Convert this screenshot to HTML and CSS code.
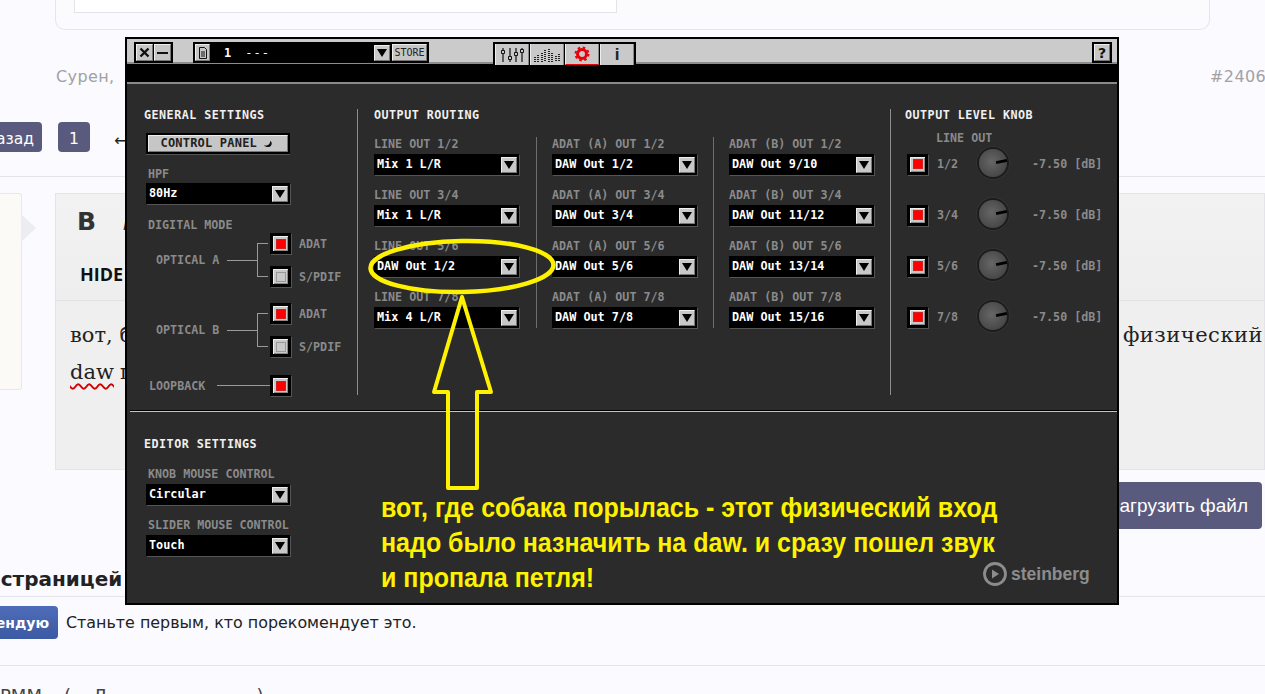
FILE: index.html
```html
<!DOCTYPE html>
<html lang="ru">
<head>
<meta charset="utf-8">
<title>Forum</title>
<link rel="stylesheet" href="styles.css">
</head>
<body>
<div class="page">
  <div class="topcard"><div class="quote"></div></div>
  <div class="author"><span>Сурен,</span><span class="postnum">#2406</span></div>
  <div class="pager"><a class="pagebtn back">назад</a><a class="pagebtn one">1</a><span class="pagearrow">←</span></div>
  <div class="compose">
    <div class="avatarbox"></div>
    <div class="editor">
      <div class="tools"><div class="fmt"><b class="bold">B</b><i class="ital">I</i></div><b class="hide">HIDE</b></div>
      <div class="edittext">
        <p class="editline"><span>вот, б</span><span class="phys">физический</span></p>
        <p class="editline"><span class="spell">daw</span> г</p>
      </div>
    </div>
  </div>
  <div class="uploadrow"><a class="upload">Загрузить файл</a></div>
  <h2 class="share">Поделиться страницей</h2>
  <div class="like"><a class="likebtn">Рекомендую</a><span>Станьте первым, кто порекомендует это.</span></div>
  <p class="foot">РММ<span class="f1">(</span><span class="f2">Л</span><span class="f3">)</span></p>
</div>

<div class="win">
  <div class="titlebar">
    <div class="frame"><span class="tb"><svg width="11" height="11" viewBox="0 0 11 11"><path d="M1.500 1.500l8 8M9.500 1.500l-8 8" stroke="#111" stroke-width="2.400" fill="none"/></svg></span><span class="tb tbmin"></span></div>
    <div class="preset">
      <span class="tb docbtn"><svg width="10" height="12" viewBox="0 0 10 12"><path d="M1.500.5h5l2 2v9h-7zM3 5h4M3 7h4M3 9h4" fill="none" stroke="#111"/></svg></span>
      <span class="presetnum">1</span><span class="presetname">---</span>
      <span class="drop presetdrop"></span>
      <span class="store">STORE</span>
    </div>
    <div class="tabs">
      <span class="tab"><svg width="26" height="16" viewBox="0 0 26 16"><path d="M4 1v14M11 1v14M17 1v14M23 1v14" stroke="#111" fill="none" stroke-width="1.200"/><path d="M2.500 3.500h3v3h-3zM9.500 9.500h3v3h-3zM15.500 5.500h3v3h-3zM21.500 2.500h3v3h-3z" fill="#ccc" stroke="#111"/></svg></span>
      <span class="tab"><svg width="26" height="14" viewBox="0 0 26 14"><path d="M1 9v5M4 7v7M8 5v9M11 2v12M15 1v13M18 5v9M22 8v6M25 6v8" stroke="#222" stroke-width="2" stroke-dasharray="1 1" fill="none"/></svg></span>
      <span class="tab tabon"><svg width="16" height="16" viewBox="0 0 16 16"><circle cx="8" cy="8" r="4.500" fill="none" stroke="#e8000a" stroke-width="3"/><circle cx="8" cy="8" r="6.500" fill="none" stroke="#e8000a" stroke-width="2" stroke-dasharray="2.500 2.600"/></svg></span>
      <span class="tab"><b class="info">i</b></span>
    </div>
    <div class="helpbtn"><span class="tb">?</span></div>
  </div>
  <div class="strip"></div>
  <div class="upper">
    <section class="general">
      <h3 class="head">GENERAL SETTINGS</h3>
      <div class="cpanel"><span class="cpface">CONTROL PANEL<svg width="10" height="10" viewBox="0 0 12 10"><path d="M8.500 1c.5 4-3 6.500-7.500 5.500 2 3 9.500 3.500 9.500-2.500 0-1-.5-2-2-3z" fill="#111"/></svg></span></div>
      <div class="lab hpf">HPF</div>
      <div class="sel gensel"><span>80Hz</span><i class="drop"></i></div>
      <div class="lab digi">DIGITAL MODE</div>
      <div class="opt opta">
        <span class="lab optname">OPTICAL A</span><i class="wire"></i><i class="brace"></i>
        <div class="optchecks">
          <div class="optrow"><i class="check on"></i><span class="lab">ADAT</span></div>
          <div class="optrow"><i class="check"></i><span class="lab">S/PDIF</span></div>
        </div>
      </div>
      <div class="opt optb">
        <span class="lab optname">OPTICAL B</span><i class="wire"></i><i class="brace"></i>
        <div class="optchecks">
          <div class="optrow"><i class="check on"></i><span class="lab">ADAT</span></div>
          <div class="optrow"><i class="check"></i><span class="lab">S/PDIF</span></div>
        </div>
      </div>
      <div class="loop"><span class="lab">LOOPBACK</span><i class="loopwire"></i><i class="check on"></i></div>
    </section>
    <i class="vrule"></i>
    <section class="routing">
      <h3 class="head">OUTPUT ROUTING</h3>
      <div class="routecols">
        <div class="routecol">
          <div class="lab">LINE OUT 1/2</div><div class="sel"><span>Mix 1 L/R</span><i class="drop"></i></div>
          <div class="lab">LINE OUT 3/4</div><div class="sel"><span>Mix 1 L/R</span><i class="drop"></i></div>
          <div class="lab">LINE OUT 5/6</div><div class="sel"><span>DAW Out 1/2</span><i class="drop"></i></div>
          <div class="lab">LINE OUT 7/8</div><div class="sel"><span>Mix 4 L/R</span><i class="drop"></i></div>
        </div>
        <div class="routecol ruled">
          <div class="lab">ADAT (A) OUT 1/2</div><div class="sel"><span>DAW Out 1/2</span><i class="drop"></i></div>
          <div class="lab">ADAT (A) OUT 3/4</div><div class="sel"><span>DAW Out 3/4</span><i class="drop"></i></div>
          <div class="lab">ADAT (A) OUT 5/6</div><div class="sel"><span>DAW Out 5/6</span><i class="drop"></i></div>
          <div class="lab">ADAT (A) OUT 7/8</div><div class="sel"><span>DAW Out 7/8</span><i class="drop"></i></div>
        </div>
        <div class="routecol ruled">
          <div class="lab">ADAT (B) OUT 1/2</div><div class="sel"><span>DAW Out 9/10</span><i class="drop"></i></div>
          <div class="lab">ADAT (B) OUT 3/4</div><div class="sel"><span>DAW Out 11/12</span><i class="drop"></i></div>
          <div class="lab">ADAT (B) OUT 5/6</div><div class="sel"><span>DAW Out 13/14</span><i class="drop"></i></div>
          <div class="lab">ADAT (B) OUT 7/8</div><div class="sel"><span>DAW Out 15/16</span><i class="drop"></i></div>
        </div>
      </div>
    </section>
    <i class="vrule"></i>
    <section class="level">
      <h3 class="head">OUTPUT LEVEL KNOB</h3>
      <div class="lab lineout">LINE OUT</div>
      <div class="knobrow"><i class="check on"></i><span class="lab knoblab">1/2</span><i class="knob"></i><span class="lab">-7.50 [dB]</span></div>
      <div class="knobrow"><i class="check on"></i><span class="lab knoblab">3/4</span><i class="knob"></i><span class="lab">-7.50 [dB]</span></div>
      <div class="knobrow"><i class="check on"></i><span class="lab knoblab">5/6</span><i class="knob"></i><span class="lab">-7.50 [dB]</span></div>
      <div class="knobrow"><i class="check on"></i><span class="lab knoblab">7/8</span><i class="knob"></i><span class="lab">-7.50 [dB]</span></div>
    </section>
  </div>
  <div class="split"></div>
  <section class="lower">
    <h3 class="head">EDITOR SETTINGS</h3>
    <div class="lab knobctl">KNOB MOUSE CONTROL</div>
    <div class="sel gensel"><span>Circular</span><i class="drop"></i></div>
    <div class="lab slidectl">SLIDER MOUSE CONTROL</div>
    <div class="sel gensel"><span>Touch</span><i class="drop"></i></div>
    <div class="logo">
      <svg width="26" height="26" viewBox="0 0 26 26"><circle cx="13" cy="13" r="10.500" fill="none" stroke="#8c8c8c" stroke-width="2.800"/><path d="M10 8.500l7 4.500-7 4.500z" fill="#8c8c8c"/></svg>
      <span>steinberg</span>
    </div>
  </section>
</div>

<svg class="marks" width="1265" height="694" viewBox="0 0 1265 694">
  <ellipse cx="462" cy="266.500" rx="91.500" ry="25.500" transform="rotate(-1 462 266.500)" fill="none" stroke="#fff200" stroke-width="4.500"/>
  <path d="M462 297L434 392H448V488H477V392H491Z" fill="none" stroke="#fff200" stroke-width="4" stroke-linejoin="round"/>
</svg>
<p class="note">вот, где собака порылась - этот физический вход<br>надо было назначить на daw. и сразу пошел звук<br>и пропала петля!</p>
</body>
</html>
```
FILE: styles.css
```css
* { box-sizing: border-box; }
html, body { margin: 0; height: 694px; overflow: hidden; background: #fafaff; }
body { position: relative; width: 1265px; font-family: "DejaVu Sans", sans-serif; color: #222; }
p, h2, h3 { margin: 0; }

/* forum page behind the window */
.page { width: 1265px; height: 694px; overflow: hidden; }
.topcard { margin: 0 55px; height: 30px; border: 1px solid #e5e5ec; border-top: 0; border-radius: 0 0 10px 10px; background: #fbfbfe; padding-left: 18px; }
.quote { width: 543px; height: 13px; border: 1px solid #e3e3ea; border-top: 0; background: #fff; }
.author { display: flex; justify-content: space-between; margin-top: 36px; height: 22px; padding-left: 56px; font-size: 16px; line-height: 22px; color: #a2a2a2; letter-spacing: .4px; }
.postnum { width: 55px; white-space: nowrap; overflow: visible; }
.pager { display: flex; align-items: center; margin-top: 34px; height: 30px; }
.pagebtn { display: block; height: 30px; line-height: 34px; background: #5a5a7e; color: #fff; border-radius: 4px; font-size: 15.500px; text-align: center; }
.back { width: 42px; margin-right: 16px; direction: rtl; padding-right: 8px; overflow: hidden; white-space: nowrap; text-align: right; border-radius: 0 4px 4px 0; }
.one { width: 32px; }
.pagearrow { margin-left: 24px; padding-top: 7px; font-size: 16px; }
.compose { display: flex; margin-top: 41px; height: 277px; position: relative; }
.compose::before { content: ""; position: absolute; left: 0; right: 0; top: -17px; height: 1px; background: #e4e4ea; }
.avatarbox { position: relative; width: 22px; height: 197px; background: #fbfaf6; border: 1px solid #e8e8e8; border-left: 0; border-radius: 0 3px 3px 0; }
.avatarbox::after { content: ""; position: absolute; left: 21px; top: 20px; width: 0; height: 0; border: 14px solid transparent; border-left: 15px solid #ecedf0; }
.editor { margin-left: 33px; flex: 1; min-width: 0; background: #efeff0; border: 1px solid #e4e4ea; }
.tools { height: 107px; border-bottom: 1px solid #e2e2e6; padding: 14px 0 0 21px; display: flex; flex-direction: column; background: linear-gradient(#f2f2f3, #eeeeef); }
.fmt { display: flex; gap: 27px; height: 28px; }
.bold { font-size: 25px; line-height: 28px; color: #333; }
.ital { font: italic bold 25px/28px "DejaVu Sans", sans-serif; color: #333; }
.hide { font: bold 18px/22px "Open Sans", sans-serif; color: #111; margin: 27px 0 0 3px; }
.edittext { padding: 16px 1px 0 14px; font: 21px/37px "DejaVu Serif", serif; color: #222; }
.editline { display: flex; gap: 6px; }
.phys { margin-left: auto; letter-spacing: .5px; }
.spell { text-decoration: underline wavy #d40000; text-decoration-thickness: 1.500px; text-underline-offset: 4px; }
.uploadrow { display: flex; justify-content: flex-end; margin-top: 12px; height: 48px; padding-right: 3px; }
.upload { width: 182px; height: 47px; background: #5a5a7e; color: #fff; border-radius: 4px; font: 19px/48px "Liberation Sans", sans-serif; text-align: right; padding-right: 14px; white-space: nowrap; }
.share { margin: 36px 0 0 -144px; font-size: 20px; line-height: 26px; white-space: nowrap; height: 30px; }
.like { display: flex; align-items: center; gap: 8px; height: 33px; margin-top: 10px; font-size: 15.900px; position: relative; }
.like::before { content: ""; position: absolute; left: 0; right: 0; top: -10px; height: 1px; background: #e4e4ea; }
.like::after { content: ""; position: absolute; left: 0; right: 0; top: 59px; height: 1px; background: #e4e4ea; }
.likebtn { width: 58px; height: 33px; background: linear-gradient(#4f6cb8, #3b5aa3); color: #fff; font-weight: bold; font-size: 14px; line-height: 34px; border-radius: 0 4px 4px 0; overflow: hidden; white-space: nowrap; direction: rtl; padding-right: 9px; }
.foot { margin-top: 47px; font-size: 18px; line-height: 20px; color: #444; }
.f1 { margin-left: 22px; }
.f2 { margin-left: 22px; }
.f3 { margin-left: 150px; }

/* the pasted hardware control-panel window */
.win { position: absolute; left: 125px; top: 37px; width: 994px; height: 568px; border: 2px solid #000; background: #2b2b2b; font-family: "DejaVu Sans Mono", monospace; overflow: hidden; }
.titlebar { display: flex; align-items: flex-start; height: 25px; padding: 3px 0 0 7px; background: #cbcbcb; border-bottom: 2px solid #8d8d8d; }
.frame { display: flex; gap: 1px; height: 21px; background: #000; padding: 2px; }
.tb { display: flex; align-items: center; justify-content: center; width: 17px; height: 17px; background: #c6c6c6; border: 1px solid; border-color: #eee #777 #777 #eee; color: #111; font: bold 14px/1 "DejaVu Sans", sans-serif; }
.tbmin::after { content: ""; width: 11px; height: 2px; background: #111; }
.preset { display: flex; align-items: center; width: 236px; height: 21px; margin-left: 20px; background: #000; padding: 2px; color: #fff; font: bold 12px/1 "DejaVu Sans Mono", monospace; }
.docbtn { width: 15px; }
.presetnum { margin-left: 14px; }
.presetname { margin-left: 14px; letter-spacing: 1px; font-weight: normal; }
.presetdrop { margin-left: auto; width: 16px; height: 17px; }
.store { display: block; width: 35px; height: 17px; margin-left: 2px; background: #c6c6c6; border: 1px solid; border-color: #eee #777 #777 #eee; color: #222; font: 10px/15px "DejaVu Sans Mono", monospace; text-align: center; }
.tabs { display: flex; gap: 1px; height: 23px; width: 143px; margin-left: 64px; background: #000; padding: 2px 2px 0; }
.tab { display: flex; align-items: center; justify-content: center; width: 34px; height: 21px; background: #c9c9c9; border-left: 1px solid #eee; border-right: 1px solid #888; }
.tabon { border-bottom: 1px solid #e8000a; }
.info { font: bold 17px/1 "Liberation Sans", sans-serif; color: #222; }
.helpbtn { margin-left: auto; margin-right: 5px; width: 20px; height: 21px; background: #000; padding: 2px; }
.helpbtn .tb { width: 16px; }
.strip { height: 18px; background: #000; }
.upper { display: flex; height: 328px; border-top: 2px solid #8a8a8a; }
.head { font: bold 11.700px/16px "DejaVu Sans Mono", monospace; color: #f0f0f0; letter-spacing: .5px; white-space: nowrap; }
.lab { font: bold 11.700px/14px "DejaVu Sans Mono", monospace; color: #8a8a8a; white-space: nowrap; }
.vrule { display: block; width: 1px; height: 286px; margin-top: 25px; background: #8e8e8e; }

.general { width: 230px; padding: 23px 0 0 17px; }
.cpanel { width: 144px; height: 21px; margin: 10px 0 0 2px; background: #000; padding: 2px; box-shadow: 0 1px 0 #555; }
.cpface { display: flex; align-items: center; justify-content: flex-end; gap: 6px; height: 17px; padding-right: 14px; background: #c6c6c6; border: 1px solid; border-color: #eee #777 #777 #eee; color: #222; font: bold 12px/15px "DejaVu Sans Mono", monospace; letter-spacing: .2px; white-space: nowrap; }
.hpf { margin: 13px 0 0 4px; }
.sel { display: flex; align-items: center; justify-content: space-between; width: 145px; height: 21px; margin-top: 3px; padding: 0 2px 0 3px; background: #000; box-shadow: 1px 1px 0 #555; color: #fff; font: bold 11.800px/1 "DejaVu Sans Mono", monospace; white-space: nowrap; }
.gensel { margin-left: 2px; width: 144px; }
.general .sel { margin-top: 2px; }
.drop { display: flex; align-items: center; justify-content: center; width: 16px; height: 16px; background: #c8c8c8; border: 1px solid; border-color: #eee #777 #777 #eee; }
.drop::after { content: ""; width: 0; height: 0; border: 5px solid transparent; border-top: 8px solid #000; border-bottom: 0; }
.digi { margin: 14px 0 0 4px; }
.opt { display: flex; align-items: center; height: 56px; margin-left: 12px; }
.opta { margin-top: 0; }
.optb { margin-top: 14px; }
.optname { width: 71px; }
.wire { display: block; width: 30px; height: 1px; background: #9a9a9a; }
.brace { display: block; width: 11px; height: 34px; border: 1px solid #9a9a9a; border-right: 0; }
.optchecks { display: flex; flex-direction: column; gap: 12px; margin-left: 2px; }
.optrow { display: flex; align-items: center; gap: 8px; }
.check { display: flex; align-items: center; justify-content: center; flex: none; width: 21px; height: 21px; background: #c9c9c9; border: 3px solid #000; box-shadow: 1px 1px 0 #555, inset 1px 1px 0 #eee, inset -1px -1px 0 #8a8a8a; }
.check::after { content: ""; width: 8px; height: 8px; border: 1px solid #999; }
.check.on::after { background: #f00; border-color: #c22; }
.loop { display: flex; align-items: center; margin: 17px 0 0 5px; }
.loopwire { display: block; width: 53px; height: 1px; margin-left: 12px; background: #9a9a9a; }

.routing { width: 532px; padding: 23px 0 0 16px; }
.routecols { display: flex; margin-top: 14px; }
.routecol { width: 145px; }
.routecol .sel + .lab { margin-top: 13px; }
.ruled { width: 162px; margin-left: 17px; padding-left: 15px; border-left: 1px solid #6e6e6e; }
.ruled + .ruled { margin-left: 15px; }

.level { padding: 23px 0 0 14px; flex: 1; }
.lineout { margin: 8px 0 0 31px; }
.knobrow { display: flex; align-items: center; height: 22px; margin: 29px 0 0 2px; }
.lineout + .knobrow { margin-top: 8px; }
.knoblab { width: 41px; margin-left: 9px; }
.knob { display: block; position: relative; width: 28px; height: 28px; margin: -2px 25px 0 1px; border-radius: 50%; background: radial-gradient(circle at 45% 45%, #666, #4a4a4a 65%, #2e2e2e); box-shadow: 0 0 0 2px #1c1c1c, 0 0 0 3px #333; }
.knob::after { content: ""; position: absolute; left: 17px; top: 11px; width: 11px; height: 3px; background: #000; transform: rotate(-12deg); }

.split { height: 2px; margin-left: 3px; background: linear-gradient(#000 50%, #c4c4c4 50%); }
.lower { position: relative; padding: 24px 0 0 17px; }
.knobctl { margin: 15px 0 0 4px; }
.slidectl { margin: 13px 0 0 4px; }
.lower .sel { margin-top: 3px; }
.logo { position: absolute; left: 855px; top: 149px; display: flex; align-items: center; gap: 3px; color: #8c8c8c; font: bold 17.500px/26px "Liberation Sans", sans-serif; }

/* yellow annotations painted over the window */
.marks { position: absolute; left: 0; top: 0; pointer-events: none; }
.note { position: absolute; left: 381px; top: 490px; font: bold 28px/35px "Liberation Sans", sans-serif; color: #fff200; white-space: nowrap; transform: scaleX(.893); transform-origin: left top; }
```
